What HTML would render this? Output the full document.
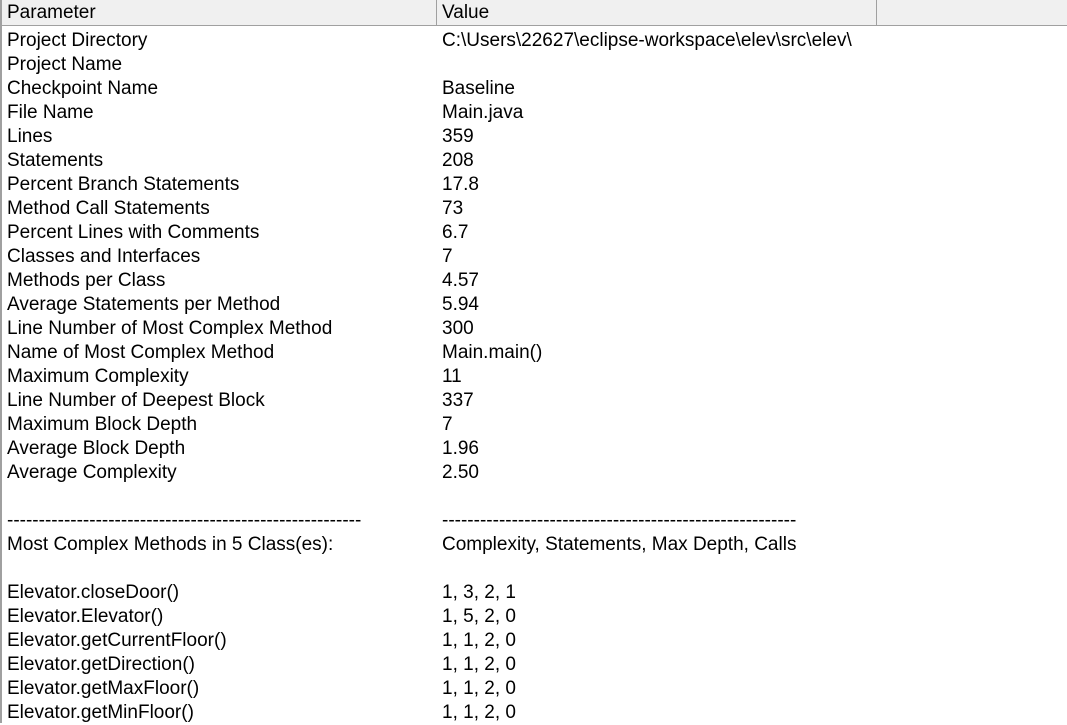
<html><head><style>
body{margin:0;width:1067px;height:723px;overflow:hidden;background:#fff;font-family:"Liberation Sans",Arial,sans-serif;font-size:19px;color:#000;position:relative}
.hd{position:absolute;top:0;left:0;width:1067px;height:25px;background:#f0f0f0;border-bottom:1px solid #a0a0a0}
.hd div{position:absolute;top:1px;height:24px;line-height:24px}
.sep{position:absolute;top:0;width:1px;height:25px;background:#a0a0a0}
.lb{position:absolute;left:0;top:0;width:2px;height:723px;background:#a0a0a0}
.r{position:absolute;height:24px;line-height:24px;white-space:pre}
</style></head><body>
<div class="hd"><div style="left:7px">Parameter</div><div style="left:442px">Value</div></div>
<div class="sep" style="left:436px"></div><div class="sep" style="left:876px"></div>
<div class="lb"></div>
<div id="rows"></div>
<div class="r" style="left:7px;top:29px">Project Directory</div><div class="r" style="left:442px;top:29px">C:\Users\22627\eclipse-workspace\elev\src\elev\</div>
<div class="r" style="left:7px;top:53px">Project Name</div>
<div class="r" style="left:7px;top:77px">Checkpoint Name</div><div class="r" style="left:442px;top:77px">Baseline</div>
<div class="r" style="left:7px;top:101px">File Name</div><div class="r" style="left:442px;top:101px">Main.java</div>
<div class="r" style="left:7px;top:125px">Lines</div><div class="r" style="left:442px;top:125px">359</div>
<div class="r" style="left:7px;top:149px">Statements</div><div class="r" style="left:442px;top:149px">208</div>
<div class="r" style="left:7px;top:173px">Percent Branch Statements</div><div class="r" style="left:442px;top:173px">17.8</div>
<div class="r" style="left:7px;top:197px">Method Call Statements</div><div class="r" style="left:442px;top:197px">73</div>
<div class="r" style="left:7px;top:221px">Percent Lines with Comments</div><div class="r" style="left:442px;top:221px">6.7</div>
<div class="r" style="left:7px;top:245px">Classes and Interfaces</div><div class="r" style="left:442px;top:245px">7</div>
<div class="r" style="left:7px;top:269px">Methods per Class</div><div class="r" style="left:442px;top:269px">4.57</div>
<div class="r" style="left:7px;top:293px">Average Statements per Method</div><div class="r" style="left:442px;top:293px">5.94</div>
<div class="r" style="left:7px;top:317px">Line Number of Most Complex Method</div><div class="r" style="left:442px;top:317px">300</div>
<div class="r" style="left:7px;top:341px">Name of Most Complex Method</div><div class="r" style="left:442px;top:341px">Main.main()</div>
<div class="r" style="left:7px;top:365px">Maximum Complexity</div><div class="r" style="left:442px;top:365px">11</div>
<div class="r" style="left:7px;top:389px">Line Number of Deepest Block</div><div class="r" style="left:442px;top:389px">337</div>
<div class="r" style="left:7px;top:413px">Maximum Block Depth</div><div class="r" style="left:442px;top:413px">7</div>
<div class="r" style="left:7px;top:437px">Average Block Depth</div><div class="r" style="left:442px;top:437px">1.96</div>
<div class="r" style="left:7px;top:461px">Average Complexity</div><div class="r" style="left:442px;top:461px">2.50</div>
<div class="r" style="left:7px;top:509px">--------------------------------------------------------</div><div class="r" style="left:442px;top:509px">--------------------------------------------------------</div>
<div class="r" style="left:7px;top:533px">Most Complex Methods in 5 Class(es):</div><div class="r" style="left:442px;top:533px">Complexity, Statements, Max Depth, Calls</div>
<div class="r" style="left:7px;top:581px">Elevator.closeDoor()</div><div class="r" style="left:442px;top:581px">1, 3, 2, 1</div>
<div class="r" style="left:7px;top:605px">Elevator.Elevator()</div><div class="r" style="left:442px;top:605px">1, 5, 2, 0</div>
<div class="r" style="left:7px;top:629px">Elevator.getCurrentFloor()</div><div class="r" style="left:442px;top:629px">1, 1, 2, 0</div>
<div class="r" style="left:7px;top:653px">Elevator.getDirection()</div><div class="r" style="left:442px;top:653px">1, 1, 2, 0</div>
<div class="r" style="left:7px;top:677px">Elevator.getMaxFloor()</div><div class="r" style="left:442px;top:677px">1, 1, 2, 0</div>
<div class="r" style="left:7px;top:701px">Elevator.getMinFloor()</div><div class="r" style="left:442px;top:701px">1, 1, 2, 0</div>
</body></html>
